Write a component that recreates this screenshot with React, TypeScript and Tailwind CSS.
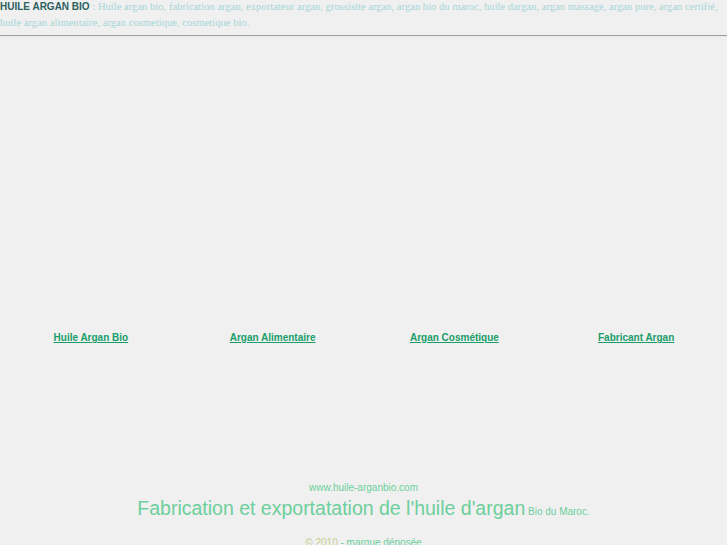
export default function App() {
  return (
    <div className="h-[545px] bg-[#f0f0f0] overflow-hidden" style={{ fontFamily: '"Liberation Sans", Arial, sans-serif' }}>
      <div className="-mt-[2px] leading-[14px]">
        <span className="text-[10px] leading-[14px] font-bold text-[#2d5f5f]">HUILE ARGAN BIO</span>
        <span className="text-[10.6px] leading-[14px] text-[#a6d6d6]" style={{ fontFamily: '"Liberation Serif", "Times New Roman", serif' }}>
          {' '}: Huile argan bio, fabrication argan, exportateur argan, grossisite argan, argan bio du maroc, huile dargan, argan massage, argan pure, argan certifié, huile argan alimentaire, argan cosmetique, cosmetique bio.
        </span>
      </div>
      <div className="mt-[5px] h-[2px] border-t border-t-[#a0a0a0] border-b border-b-[#e8e8e8] bg-[#c4c4c4]" />
      <div className="mt-[294px] grid grid-cols-4 text-center text-[10px] font-bold leading-[14px]">
        <a href="#" className="text-[#1a9d6a] underline">Huile Argan Bio</a>
        <a href="#" className="text-[#1a9d6a] underline">Argan Alimentaire</a>
        <a href="#" className="text-[#1a9d6a] underline">Argan Cosmétique</a>
        <a href="#" className="text-[#1a9d6a] underline">Fabricant Argan</a>
      </div>
      <div className="mt-[136px] text-center text-[#6dcf9c]">
        <div className="text-[10px] leading-[14px]">www.huile-arganbio.com</div>
        <div className="mt-[1px] leading-[24px]">
          <span className="text-[19.5px]">Fabrication et exportatation de l'huile d'argan</span>
          <span className="text-[10px]"> Bio du Maroc.</span>
        </div>
        <div className="mt-[12px] text-[10px] leading-[14px]">
          <span className="text-[#c9cf8f]">© 2010</span> - marque déposée
        </div>
      </div>
    </div>
  );
}
